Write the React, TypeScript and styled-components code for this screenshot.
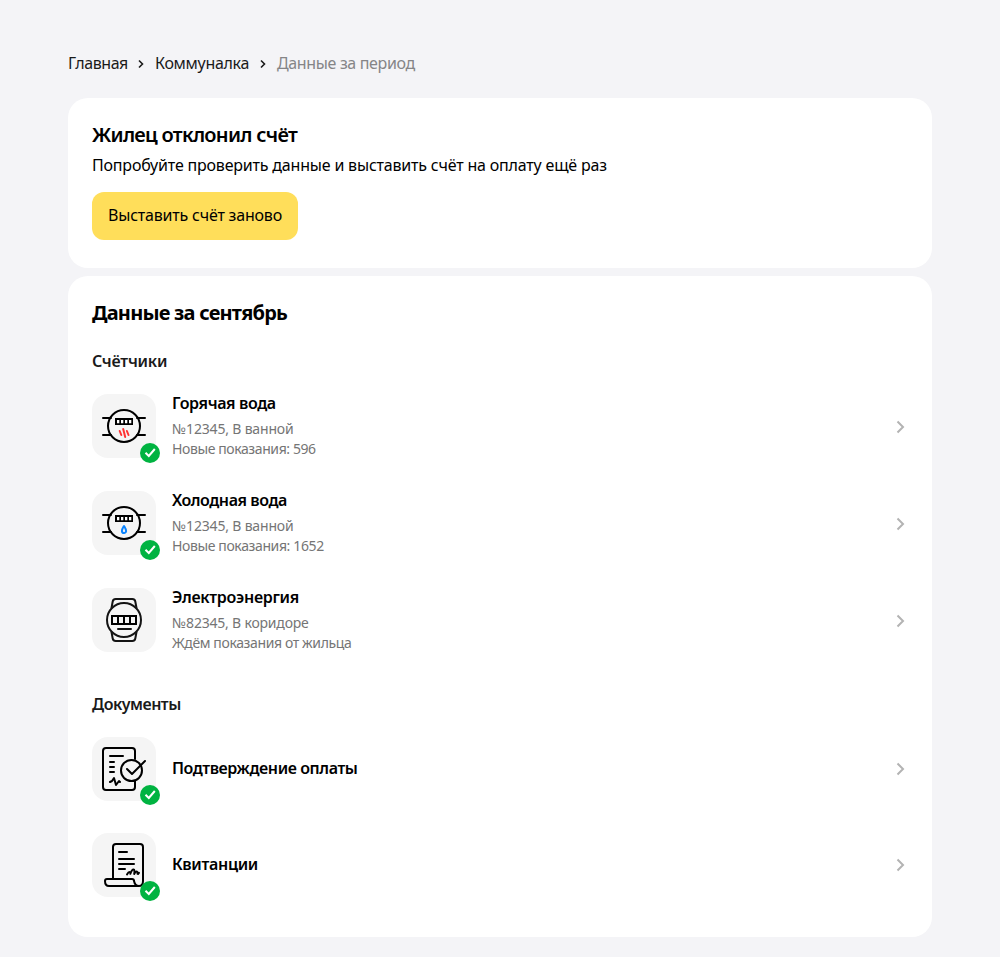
import React from 'react';
import styled, { createGlobalStyle } from 'styled-components';

const GlobalStyle = createGlobalStyle`
  * { box-sizing: border-box; }
  body {
    margin: 0;
    background: #f4f4f7;
    color: #000;
    font-family: "Noto Sans", "Open Sans", sans-serif;
    font-size: 16px;
    line-height: 20px;
  }
  h1, h2, h3, p { margin: 0; }
`;

const Page = styled.main`
  width: 864px;
  height: 957px;
  margin: 0 auto;
  padding-top: 53px;
`;

const Text = styled.span<{ $track?: number }>`
  display: block;
  white-space: nowrap;
  letter-spacing: ${(p) => p.$track ?? 0}px;
`;

const Breadcrumbs = styled.nav`
  display: flex;
  align-items: center;
  height: 20px;
  margin-bottom: 25px;
  color: #1a1a1a;
`;

const Crumb = styled(Text)<{ $width?: number; $muted?: boolean }>`
  width: ${(p) => (p.$width ? `${p.$width}px` : 'auto')};
  color: ${(p) => (p.$muted ? '#858587' : 'inherit')};
`;

const CrumbArrow = styled.svg`
  width: 8px;
  height: 10px;
  margin: 2px 10px 0 9px;
`;

const Card = styled.section<{ $height: number }>`
  height: ${(p) => p.$height}px;
  padding: 24px;
  margin-bottom: 8px;
  border-radius: 20px;
  background: #fff;
`;

const Title = styled(Text)<{ $weight?: number }>`
  font-size: 20px;
  line-height: 26px;
  font-weight: ${(p) => p.$weight ?? 600};
`;

const Lead = styled(Text)`
  margin-top: 7px;
`;

const Button = styled.button`
  display: flex;
  align-items: center;
  width: 206px;
  height: 48px;
  margin-top: 17px;
  padding: 0 16px 2px;
  border: 0;
  border-radius: 12px;
  background: #ffde5a;
  color: #000;
  font: inherit;
`;

const Subtitle = styled(Text)`
  margin-top: 25px;
  font-size: 16px;
  font-weight: 600;
  color: #1a1a1a;
`;

const List = styled.div`
  display: flex;
  flex-direction: column;
  gap: 32px;
  margin: 23px 0 0;

  & + ${Subtitle} {
    margin-top: 41px;
  }
`;

const Row = styled.div`
  display: flex;
  align-items: center;
  min-height: 64px;
`;

const Thumb = styled.div`
  position: relative;
  align-self: stretch;
  width: 64px;
  margin-right: 16px;
`;

const Tile = styled.div`
  width: 64px;
  height: 64px;
  border-radius: 16px;
  background: #f5f5f5;
  svg { display: block; }
`;

const Badge = styled.svg`
  position: absolute;
  right: -4px;
  bottom: -4px;
  width: 20px;
  height: 20px;
`;

const RowBody = styled.div`
  flex: 1;
`;

const RowTitle = styled(Text)`
  padding-bottom: 1px;
  font-size: 16px;
  line-height: 18px;
  font-weight: 600;

  &:only-child {
    padding-bottom: 3px;
  }
`;

const Details = styled.div`
  margin-top: 6px;
  font-size: 14px;
  color: #757575;
`;

const RowArrow = styled.svg`
  width: 16px;
  height: 16px;
  flex: none;
`;

const Drawing = ({ color = '#000', children }: { color?: string; children: React.ReactNode }) => (
  <svg width="64" height="64" viewBox="0 0 64 64" fill="none" stroke={color} strokeWidth="2" strokeLinecap="round" strokeLinejoin="round">
    {children}
  </svg>
);

const WaterMeter = ({ children }: { children: React.ReactNode }) => (
  <Drawing>
    <circle cx="32" cy="32" r="16" />
    <path d="M11 24h8M45 24h8M11 41h8M45 41h8" />
    <path d="M23 24h18v7H23z" fill="#000" stroke="none" />
    <path d="M25 26h2.300v3.200h-2.300zM29 26h2.300v3.200h-2.300zM33 26h2.300v3.200h-2.300zM37 26h2.300v3.200h-2.300z" fill="#fff" stroke="none" />
    {children}
  </Drawing>
);

const HotWater = () => (
  <WaterMeter>
    <path d="M27.700 37l1.600 4M31.200 35l2 8M34.900 37l1.600 4" stroke="#ff3333" />
  </WaterMeter>
);

const ColdWater = () => (
  <WaterMeter>
    <path d="M32 35c-1.200 2-2.100 3.300-2.100 4.900a2.100 2.100 0 0 0 4.200 0c0-1.600-.9-2.900-2.100-4.900z" stroke="#0a84ff" />
  </WaterMeter>
);

const PowerMeter = () => (
  <Drawing color="#141414">
    <circle cx="32" cy="32" r="17" />
    <path d="M19.500 20l1.200-6.500q.5-2.500 3-2.500h16.600q2.500 0 3 2.500L44.500 20M19.500 44l1.200 6.500q.5 2.500 3 2.500h16.600q2.500 0 3-2.500L44.500 44" />
    <path d="M20 28h24v8H20zM26 28v8M32 28v8M38 28v8" stroke="#000" strokeLinejoin="miter" />
    <path d="M26 41h13" />
  </Drawing>
);

const Confirmation = () => (
  <Drawing>
    <path d="M43 22v-8q0-3-3-3H14q-3 0-3 3v36q0 3 3 3h26q3 0 3-3v-6" />
    <path d="M18 19h13M18 25h4M18 30h4M18 35h4M18 45l2-1 2-3 2 7 3-4 1 1" />
    <circle cx="39.500" cy="33.500" r="10.500" />
    <path d="M35 32l5 5 13-13" />
  </Drawing>
);

const Receipt = () => (
  <Drawing>
    <path d="M21 45V14q0-3 3-3h24q3 0 3 3v34q0 5-4 5t-5-5q0-2-2-2H15q-2 0-2 2 0 5 4 5h30" />
    <path d="M27 19h8M27 26h15M27 31h15M27 36h6" />
    <path d="M35 41.500q1.500-2.700 2.700-2.400t.6 1.700q1.700-4.500 3.200-4.300t.7 4.500q1.500-2.800 2.500-2.500t.8 2.300q.7.500 1.500-1" />
  </Drawing>
);

const DoneBadge = () => (
  <Badge viewBox="0 0 20 20" fill="none">
    <circle cx="10" cy="10" r="10" fill="#00b341" />
    <path d="M5.500 9.700l3.300 3.300 6-7" stroke="#fff" strokeWidth="2" />
  </Badge>
);

interface Entry {
  icon: React.ReactNode;
  title: string;
  track: number;
  done?: boolean;
  lines?: [string, number][];
}

const meters: Entry[] = [
  { icon: <HotWater />, title: 'Горячая вода', track: -0.38, done: true, lines: [['№12345, В ванной', -0.18], ['Новые показания: 596', -0.4]] },
  { icon: <ColdWater />, title: 'Холодная вода', track: -0.43, done: true, lines: [['№12345, В ванной', -0.18], ['Новые показания: 1652', -0.38]] },
  { icon: <PowerMeter />, title: 'Электроэнергия', track: -0.3, lines: [['№82345, В коридоре', -0.2], ['Ждём показания от жильца', -0.38]] },
];

const documents: Entry[] = [
  { icon: <Confirmation />, title: 'Подтверждение оплаты', track: -0.4, done: true },
  { icon: <Receipt />, title: 'Квитанции', track: -0.33, done: true },
];

const EntryRow = ({ icon, title, track, done, lines }: Entry) => (
  <Row>
    <Thumb>
      <Tile>{icon}</Tile>
      {done && <DoneBadge />}
    </Thumb>
    <RowBody>
      <RowTitle as="h3" $track={track}>{title}</RowTitle>
      {lines && (
        <Details>
          {lines.map(([line, t]) => <Text key={line} $track={t}>{line}</Text>)}
        </Details>
      )}
    </RowBody>
    <RowArrow viewBox="0 0 16 16" fill="none" stroke="#b3b3b3" strokeWidth="2">
      <path d="M5.500 2.500L11 8l-5.500 5.500" />
    </RowArrow>
  </Row>
);

const Separator = () => (
  <CrumbArrow viewBox="0 0 8 10" fill="none" stroke="#1a1a1a" strokeWidth="1.600">
    <path d="M2 1.500L5.500 5 2 8.500" />
  </CrumbArrow>
);

export default function App() {
  return (
    <>
      <GlobalStyle />
      <Page>
        <Breadcrumbs>
          <Crumb $width={60} $track={-0.43}>Главная</Crumb>
          <Separator />
          <Crumb $width={95} $track={-0.3}>Коммуналка</Crumb>
          <Separator />
          <Crumb $muted $track={-0.35}>Данные за период</Crumb>
        </Breadcrumbs>
        <Card $height={170}>
          <Title as="h1" $track={-0.72}>Жилец отклонил счёт</Title>
          <Lead as="p" $track={-0.19}>Попробуйте проверить данные и выставить счёт на оплату ещё раз</Lead>
          <Button><Text $track={-0.2}>Выставить счёт заново</Text></Button>
        </Card>
        <Card $height={661}>
          <Title as="h2" $weight={700} $track={-0.79}>Данные за сентябрь</Title>
          <Subtitle as="h3" $track={-0.2}>Счётчики</Subtitle>
          <List>{meters.map((m) => <EntryRow key={m.title} {...m} />)}</List>
          <Subtitle as="h3" $track={-0.5}>Документы</Subtitle>
          <List>{documents.map((d) => <EntryRow key={d.title} {...d} />)}</List>
        </Card>
      </Page>
    </>
  );
}
